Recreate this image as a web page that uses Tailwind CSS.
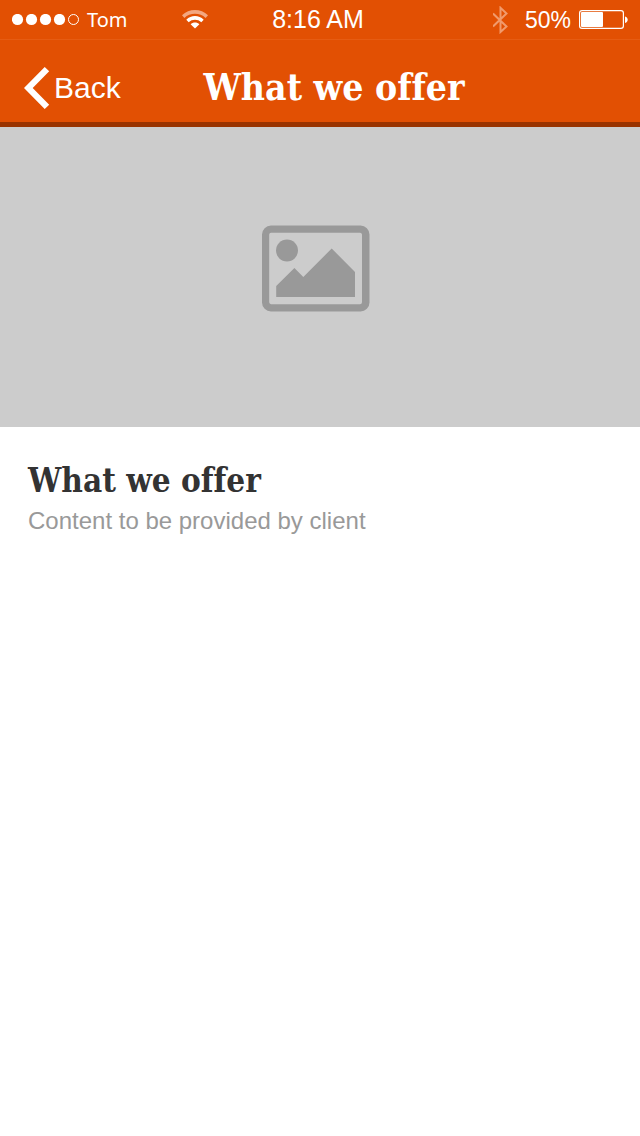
<!DOCTYPE html>
<html lang="en">
<head>
<meta charset="utf-8">
<meta name="viewport" content="width=device-width, initial-scale=1">
<title>What we offer</title>
<script src="https://cdn.jsdelivr.net/npm/@tailwindcss/browser@4"></script>
</head>
<body class="min-h-screen bg-white font-['Liberation_Sans',Arial,sans-serif]">
<header class="border-b-5 border-[#993300] bg-[#e25003] text-white">
  <div class="grid h-10 grid-cols-[1fr_auto_1fr] items-center border-b border-[#e65c13] pr-3 pl-3">
    <div class="flex items-center">
      <svg class="h-3 w-[67px]" viewBox="0 0 67 12" fill="currentColor" aria-hidden="true">
        <circle cx="5.5" cy="5.5" r="5.6"/><circle cx="19.5" cy="5.5" r="5.6"/><circle cx="33.5" cy="5.5" r="5.6"/><circle cx="47.5" cy="5.5" r="5.6"/>
        <circle cx="61.5" cy="5.5" r="5" fill="none" stroke="currentColor"/>
      </svg>
      <span class="ml-2 font-['Noto_Sans',sans-serif] text-[20px] leading-10">Tom</span>
      <svg class="ml-[54px] h-[18px] w-[26px] overflow-visible" viewBox="0 0 26 18" aria-label="Wi-Fi">
        <path d="M0 4.3C7-2.8 19-2.8 26 4.3L23.6 6.9C18 1.3 8 1.3 2.4 6.9Z" fill="#f3a781"/>
        <path d="M4.3 8.7C9 3.9 17 3.9 21.7 8.7L19.3 11.2C16 7.9 10 7.9 6.7 11.2Z" fill="#fff"/>
        <path d="M8.6 13.2C11 11 15 11 17.4 13.2L13 17.4Z" fill="#fff"/>
      </svg>
    </div>
    <time class="pr-1 text-[25px]">8:16 AM</time>
    <div class="flex items-center justify-end">
      <svg class="h-7 w-4" viewBox="0 0 16 28" fill="none" stroke="#f19a6c" stroke-width="2" aria-label="Bluetooth">
        <path d="M0 7.5L13.5 20.5L7.5 26V1.8L13.5 7.5L0 20.5"/>
      </svg>
      <span class="ml-4 text-[23px]">50%</span>
      <svg class="ml-2 h-5 w-[49px]" viewBox="0 0 49 20" fill="none" aria-label="Battery">
        <rect x=".6" y=".6" width="43.8" height="17.8" rx="2.4" stroke="#fff" stroke-width="1.2"/>
        <rect x="2" y="2" width="22" height="15" rx="1" fill="#fff"/>
        <path d="M46 6.5C49.6 7.5 49.6 12 46 13Z" fill="#fff"/>
      </svg>
    </div>
  </div>
  <div class="grid h-[82px] grid-cols-[1fr_auto_1fr] items-center pt-3 pl-6">
    <button type="button" class="flex items-center gap-1 justify-self-start pt-0.5 text-[30px] leading-9">
      <svg class="h-[42px] w-[26px]" viewBox="0 0 26 42" fill="currentColor" aria-hidden="true"><path d="M20.7 0L25.2 4.2L8.7 21L25.2 37.8L20.7 42L0 21Z"/></svg>
      Back
    </button>
    <h1 class="pl-1 font-['Roboto_Slab','DejaVu_Serif_Condensed','DejaVu_Serif',serif] text-[37px] leading-10 font-bold whitespace-nowrap [font-variant-ligatures:none]">What we offer</h1>
  </div>
</header>
<main>
  <div class="flex h-75 items-center justify-center bg-[#cccccc] pr-2 pb-[18px]">
    <svg class="h-[87px] w-[108px]" viewBox="0 0 108 87" fill="#999" role="img" aria-label="Image placeholder">
      <path fill-rule="evenodd" d="M9 .5H98.500A9 9 0 0 1 107.500 9.500V77.500A9 9 0 0 1 98.500 86.500H9A9 9 0 0 1 0 77.500V9.500A9 9 0 0 1 9 .5ZM9 7.800A2 2 0 0 0 7.200 9.600V77.300A2 2 0 0 0 9 79.200H98A2 2 0 0 0 100 77.300V9.600A2 2 0 0 0 98 7.800Z"/>
      <circle cx="25" cy="25.5" r="11"/>
      <path d="M14.200 61L32.400 43L41.300 52L69.700 23.500L93 47V72H14.200Z"/>
    </svg>
  </div>
  <section class="px-7 pt-8">
    <h2 class="font-['Roboto_Slab','DejaVu_Serif_Condensed','DejaVu_Serif',serif] text-[33px] leading-11 font-bold text-[#333333] [font-variant-ligatures:none]">What we offer</h2>
    <p class="mt-1 text-2xl leading-7 text-[#999999]">Content to be provided by client</p>
  </section>
</main>
</body>
</html>
